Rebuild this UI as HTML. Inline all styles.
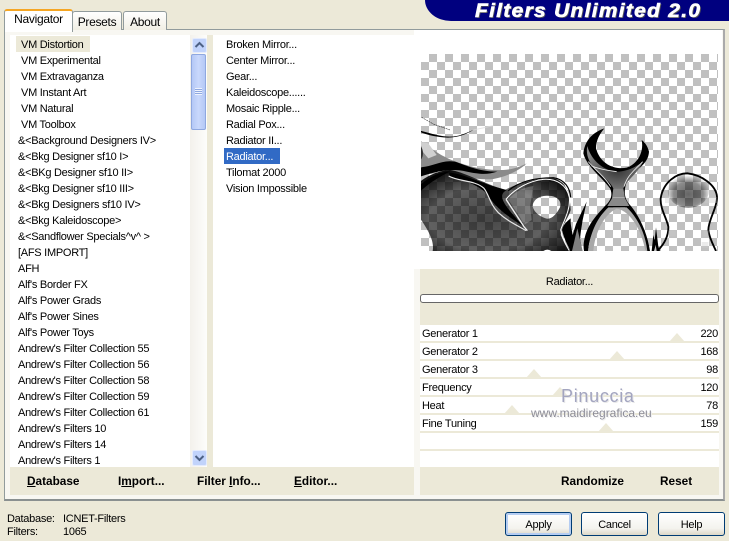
<!DOCTYPE html>
<html><head><meta charset="utf-8"><style>
html,body{margin:0;padding:0}
body{width:729px;height:539px;position:relative;overflow:hidden;background:#ece9d8;font-family:"Liberation Sans",sans-serif;font-size:11px;letter-spacing:-.27px;color:#000}
div{position:absolute}
.t{white-space:pre;line-height:18px;height:16px}
.b{font-weight:bold;font-size:11.8px;letter-spacing:0;line-height:16px;white-space:pre;top:473px}
.tab{border:1px solid #919b9c;border-bottom:0;border-radius:3px 3px 0 0;background:linear-gradient(#fff,#f1efe4);text-align:center;font-size:12px;letter-spacing:-.3px}
.btn{top:512px;width:65px;height:22px;border:1px solid #003c74;border-radius:3px;background:linear-gradient(#fff,#f4f3ee 70%,#dcd8c8);text-align:center;line-height:24px}
.row{left:420px;width:299px;height:16px;background:#fff}
.lbl{left:422px;line-height:18px}
.val{right:11px;line-height:18px;text-align:right}
.tri{width:0;height:0;border-left:8px solid transparent;border-right:8px solid transparent;border-bottom:9px solid #ece9d8}
</style></head><body>
<div style="left:425px;top:0;width:304px;height:21px;background:#00007f;border-bottom-left-radius:26px 21px"></div>
<div style="left:475px;top:0;color:#fff;font:italic bold 19px/23px 'Liberation Sans',sans-serif;letter-spacing:1.2px;white-space:pre;-webkit-text-stroke:.6px #fff;text-shadow:1px 1px 0 #555;transform:scaleX(1.1);transform-origin:0 0">Filters Unlimited 2.0</div>

<div style="left:4px;top:29px;width:718px;height:469px;background:#f8f7f2;border:1px solid #919b9c;border-bottom:2px solid #8a9090;border-right:2px solid #aaa"></div>
<div class="tab" style="left:72px;top:11px;width:48px;height:18px;line-height:20px">Presets</div>
<div class="tab" style="left:123px;top:11px;width:42px;height:18px;line-height:20px">About</div>
<div class="tab" style="left:4px;top:9px;width:67px;height:19px;padding-bottom:2px;background:#fff;border-top:2px solid #f5a623;line-height:17px">Navigator</div>

<div style="left:10px;top:35px;width:180px;height:432px;background:#fff"></div>
<div style="left:190px;top:35px;width:17px;height:432px;background:linear-gradient(90deg,#f3f1ec,#fdfdfb)"></div>
<div style="left:207px;top:35px;width:6px;height:432px;background:#ece9d8"></div>
<div style="left:213px;top:35px;width:201px;height:432px;background:#fff"></div>
<div style="left:414px;top:30px;width:308px;height:239px;background:#fff"></div>

<div style="left:192px;top:38px;width:13px;height:13px;background:#c1d3fb;border:1px solid #e4ebfd;border-radius:2px"></div>
<svg style="position:absolute;left:192px;top:38px" width="15" height="15"><path d="M3.5 9 7.5 5l4 4" fill="none" stroke="#4d6185" stroke-width="2"/></svg>
<div style="left:191px;top:54px;width:13px;height:74px;background:linear-gradient(90deg,#b4c8f6,#c9d8fc 50%,#b4c8f6);border:1px solid #8fa8e0;border-radius:2px"></div>
<div style="left:195px;top:88px;width:7px;height:7px;background:repeating-linear-gradient(#eef3fe 0 1px,#8fa8e0 1px 2px)"></div>
<div style="left:192px;top:450px;width:13px;height:14px;background:#c1d3fb;border:1px solid #e4ebfd;border-radius:2px"></div>
<svg style="position:absolute;left:192px;top:450px" width="15" height="15"><path d="M3.5 6 7.5 10l4-4" fill="none" stroke="#4d6185" stroke-width="2"/></svg>

<div style="left:16px;top:36px;width:74px;height:16px;background:#ece9d8"></div>
<div style="left:224px;top:148px;width:56px;height:16px;background:#316ac5"></div>

<div class="t" style="left:21px;top:36px">VM Distortion</div>
<div class="t" style="left:21px;top:52px">VM Experimental</div>
<div class="t" style="left:21px;top:68px">VM Extravaganza</div>
<div class="t" style="left:21px;top:84px">VM Instant Art</div>
<div class="t" style="left:21px;top:100px">VM Natural</div>
<div class="t" style="left:21px;top:116px">VM Toolbox</div>
<div class="t" style="left:18px;top:132px">&amp;&lt;Background Designers IV&gt;</div>
<div class="t" style="left:18px;top:148px">&amp;&lt;Bkg Designer sf10 I&gt;</div>
<div class="t" style="left:18px;top:164px">&amp;&lt;BKg Designer sf10 II&gt;</div>
<div class="t" style="left:18px;top:180px">&amp;&lt;Bkg Designer sf10 III&gt;</div>
<div class="t" style="left:18px;top:196px">&amp;&lt;Bkg Designers sf10 IV&gt;</div>
<div class="t" style="left:18px;top:212px">&amp;&lt;Bkg Kaleidoscope&gt;</div>
<div class="t" style="left:18px;top:228px">&amp;&lt;Sandflower Specials^v^ &gt;</div>
<div class="t" style="left:18px;top:244px">[AFS IMPORT]</div>
<div class="t" style="left:18px;top:260px">AFH</div>
<div class="t" style="left:18px;top:276px">Alf's Border FX</div>
<div class="t" style="left:18px;top:292px">Alf's Power Grads</div>
<div class="t" style="left:18px;top:308px">Alf's Power Sines</div>
<div class="t" style="left:18px;top:324px">Alf's Power Toys</div>
<div class="t" style="left:18px;top:340px">Andrew's Filter Collection 55</div>
<div class="t" style="left:18px;top:356px">Andrew's Filter Collection 56</div>
<div class="t" style="left:18px;top:372px">Andrew's Filter Collection 58</div>
<div class="t" style="left:18px;top:388px">Andrew's Filter Collection 59</div>
<div class="t" style="left:18px;top:404px">Andrew's Filter Collection 61</div>
<div class="t" style="left:18px;top:420px">Andrew's Filters 10</div>
<div class="t" style="left:18px;top:436px">Andrew's Filters 14</div>
<div class="t" style="left:18px;top:452px">Andrew's Filters 1</div>

<div class="t" style="left:226px;top:36px">Broken Mirror...</div>
<div class="t" style="left:226px;top:52px">Center Mirror...</div>
<div class="t" style="left:226px;top:68px">Gear...</div>
<div class="t" style="left:226px;top:84px">Kaleidoscope......</div>
<div class="t" style="left:226px;top:100px">Mosaic Ripple...</div>
<div class="t" style="left:226px;top:116px">Radial Pox...</div>
<div class="t" style="left:226px;top:132px">Radiator II...</div>
<div class="t" style="left:226px;top:148px;color:#fff">Radiator...</div>
<div class="t" style="left:226px;top:164px">Tilomat 2000</div>
<div class="t" style="left:226px;top:180px">Vision Impossible</div>

<div style="left:421px;top:54px;width:297px;height:197px;background:conic-gradient(#c0c0c0 25%,#fff 0 50%,#c0c0c0 0 75%,#fff 0) 0 0/16px 16px"></div>
<svg style="position:absolute;left:421px;top:110px" width="297" height="141" viewBox="3 0 891 423">
<defs>
<radialGradient id="g1" cx=".45" cy=".6" r=".65"><stop offset="0" stop-color="#000" stop-opacity=".72"/><stop offset=".6" stop-color="#000" stop-opacity=".62"/><stop offset="1" stop-color="#000" stop-opacity=".92"/></radialGradient>
<radialGradient id="g2" cx=".5" cy=".6" r=".55"><stop offset="0" stop-color="#000" stop-opacity=".6"/><stop offset=".65" stop-color="#000" stop-opacity=".45"/><stop offset="1" stop-color="#000" stop-opacity="0"/></radialGradient>
<radialGradient id="g3" cx=".55" cy=".55" r=".6"><stop offset="0" stop-color="#333"/><stop offset="1" stop-color="#888"/></radialGradient>
</defs>
<!-- top-left wisps -->
<path d="M5 22 40 42 90 60" fill="none" stroke="#000" stroke-width="1.5" stroke-dasharray="6 2"/>
<path d="M0 62C40 72 75 85 110 78 130 74 145 66 160 60 140 72 110 86 70 82 40 80 15 72 0 66Z" fill="#000"/>
<path d="M160 60 220 47" stroke="#ddd" stroke-width="3" opacity=".7"/>
<!-- upper flame -->
<path d="M0 92C25 105 45 130 100 152 150 172 200 182 250 180 280 178 300 170 320 160 300 180 260 200 220 207 170 212 120 195 90 190L0 170Z" fill="#8a8a8a"/>
<path d="M0 95 25 100 50 135 25 145 8 125Z" fill="#d0d0d0"/>
<path d="M0 172C40 170 65 148 105 155 135 165 175 185 232 185 200 195 180 193 140 185 100 175 60 180 0 200Z" fill="#000"/>
<path d="M0 105C12 120 12 140 0 152Z" fill="#333"/>
<!-- main blob -->
<path fill-rule="evenodd" d="M0 215C30 192 60 182 90 180 130 185 180 215 255 240 300 215 350 205 400 205 435 212 450 245 452 300 445 325 425 345 422 375 430 395 445 410 452 423H38C42 400 35 375 0 325ZM338 285C345 260 370 255 395 258 415 262 425 275 420 292 410 312 395 328 380 326 360 320 338 305 338 285Z" fill="url(#g1)"/>
<path d="M0 225C30 198 60 186 90 184 70 195 30 215 0 245Z" fill="#000"/>
<path d="M265 268C285 245 310 232 340 228L330 290 335 330 312 345C300 315 280 295 265 268Z" fill="#fff" opacity=".22"/>
<path d="M88 188C130 190 185 222 260 240 235 255 240 275 312 350 255 315 220 285 200 250 170 222 125 208 88 200Z" fill="#000"/>
<path d="M86 198C115 215 165 210 192 235 208 255 208 280 235 308 265 335 290 345 318 362" fill="none" stroke="#e8e8e8" stroke-width="3.5"/>
<path d="M258 268 312 350 322 362" fill="none" stroke="#eee" stroke-width="4"/>
<path d="M258 268C285 235 330 212 370 208 410 205 440 225 448 262 452 300 430 335 422 360 428 390 438 405 448 422" fill="none" stroke="#fff" stroke-width="3"/>
<path d="M265 242C300 212 350 203 400 203 435 208 450 235 452 262" fill="none" stroke="#000" stroke-width="3.5"/>
<path d="M426 360C432 385 442 405 452 423V325C440 335 428 345 426 360Z" fill="#000"/>
<path d="M370 423q12-8 24 0" fill="#fff"/>
<g transform="translate(450,30)">
<!-- spikes -->
<path d="M0 300 8 345 18 312 50 245 38 300 30 350 36 393H0Z" fill="#000"/>
<path d="M22 325 6 393H38Z" fill="#808080"/>
<!-- hourglass -->
<path d="M103 25C75 35 45 55 40 100 50 140 95 170 120 205 128 222 125 240 105 258 85 280 55 310 45 350 40 370 40 380 42 393H55C55 360 75 300 130 262H165C200 290 225 340 228 393H240C232 340 210 290 180 255 160 235 160 205 175 175 195 150 235 135 237 95 232 75 222 65 215 60 222 95 205 130 170 143 130 150 90 130 78 85 78 60 90 40 103 25Z" fill="#000"/>
<path d="M52 78C60 110 90 150 140 155 170 155 200 140 218 125 205 160 175 175 160 205H130C115 175 85 165 65 135 52 115 48 95 52 78Z" fill="url(#g3)"/>
<path d="M55 125C75 150 105 170 122 200M218 125C195 150 172 165 162 200M65 138C95 150 120 152 140 155" fill="none" stroke="#eee" stroke-width="2.5"/>
<path d="M130 205H160L165 235 178 258H112L126 235Z" fill="#8a8a8a"/>
<path d="M128 232H164" stroke="#ccc" stroke-width="1.5"/>
<path d="M115 262C85 290 62 330 54 393H70C75 340 100 285 140 266 180 272 215 330 226 393H232C225 330 195 285 170 262Z" fill="#a8a8a8"/>
<!-- small spike -->
<path d="M245 393 250 345 254 360 258 322 265 380 270 393H260L257 375 252 393Z" fill="#000"/>
<!-- ball -->
<ellipse cx="355" cy="212" rx="62" ry="52" fill="url(#g2)"/>
<path d="M262 393C280 375 296 350 295 320 290 295 270 265 272 235 280 185 320 160 352 160 395 165 438 195 441 230 441 265 415 300 415 330 418 355 430 375 438 393" fill="none" stroke="#000" stroke-width="5.5"/>
<path d="M285 240h22M405 240h35M295 340h22M400 340h16M395 375h20" stroke="#ccc" stroke-width="18" opacity=".38"/>
</g>
</svg>

<div style="left:420px;top:269px;width:299px;height:198px;background:#ece9d8"></div>
<div class="t" style="left:420px;top:273px;width:299px;text-align:center">Radiator...</div>
<div style="left:420px;top:294px;width:297px;height:7px;background:#fff;border:1px solid #666;border-radius:3px"></div>

<div class="row" style="top:325px"></div>
<div class="row" style="top:343px"></div>
<div class="row" style="top:361px"></div>
<div class="row" style="top:379px"></div>
<div class="row" style="top:397px"></div>
<div class="row" style="top:415px"></div>
<div class="row" style="top:433px"></div>
<div class="row" style="top:451px"></div>
<div class="tri" style="left:669px;top:333px"></div>
<div class="tri" style="left:609px;top:351px"></div>
<div class="tri" style="left:526px;top:369px"></div>
<div class="tri" style="left:552px;top:387px"></div>
<div class="tri" style="left:504px;top:405px"></div>
<div class="tri" style="left:598px;top:423px"></div>
<div class="lbl" style="top:325px">Generator 1</div>
<div class="lbl" style="top:343px">Generator 2</div>
<div class="lbl" style="top:361px">Generator 3</div>
<div class="lbl" style="top:379px">Frequency</div>
<div class="lbl" style="top:397px">Heat</div>
<div class="lbl" style="top:415px">Fine Tuning</div>
<div class="val" style="top:325px">220</div>
<div class="val" style="top:343px">168</div>
<div class="val" style="top:361px">98</div>
<div class="val" style="top:379px">120</div>
<div class="val" style="top:397px">78</div>
<div class="val" style="top:415px">159</div>
<div style="left:561px;top:385px;color:#a3a5c0;font-size:18px;line-height:22px;letter-spacing:.7px;white-space:pre;text-shadow:1px 1px 0 #e8e8e8">Pinuccia</div>
<div style="left:531px;top:406px;color:#8d8d98;font-size:12px;letter-spacing:0;line-height:14px;white-space:pre;text-shadow:1px 1px 0 #eee">www.maidiregrafica.eu</div>

<div style="left:10px;top:467px;width:404px;height:28px;background:#ece9d8"></div>
<div style="left:420px;top:467px;width:299px;height:28px;background:#ece9d8"></div>
<div class="b" style="left:27px"><u>D</u>atabase</div>
<div class="b" style="left:118px">I<u>m</u>port...</div>
<div class="b" style="left:197px">Filter <u>I</u>nfo...</div>
<div class="b" style="left:294px"><u>E</u>ditor...</div>
<div class="b" style="left:561px">Randomize</div>
<div class="b" style="left:660px">Reset</div>

<div class="t" style="left:7px;top:510px">Database:</div>
<div class="t" style="left:63px;top:510px">ICNET-Filters</div>
<div class="t" style="left:7px;top:523px">Filters:</div>
<div class="t" style="left:63px;top:523px">1065</div>

<div class="btn" style="left:505px;box-shadow:inset 0 0 0 2px #b5cdf2">Apply</div>
<div class="btn" style="left:581px">Cancel</div>
<div class="btn" style="left:658px">Help</div>
</body></html>
